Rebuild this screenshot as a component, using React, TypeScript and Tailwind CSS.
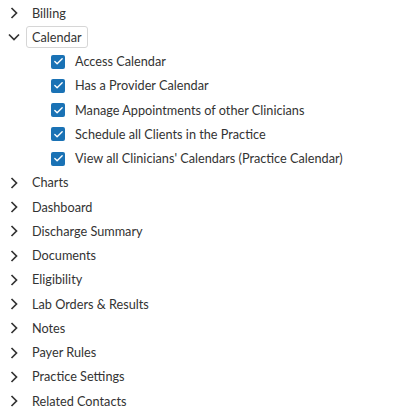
import { Check } from "lucide-react"

const before = ["Billing"]
const after = [
    "Charts",
    "Dashboard",
    "Discharge Summary",
    "Documents",
    "Eligibility",
    "Lab Orders & Results",
    "Notes",
    "Payer Rules",
    "Practice Settings",
    "Related Contacts",
]
const calendarPerms = [
    "Access Calendar",
    "Has a Provider Calendar",
    "Manage Appointments of other Clinicians",
    "Schedule all Clients in the Practice",
    "View all Clinicians' Calendars (Practice Calendar)",
]

const ChevronRight = () => (
    <svg width="8" height="12" viewBox="0 0 8 12" className="shrink-0">
        <path d="M1.5 1 L6.5 6 L1.5 11" fill="none" stroke="#333" strokeWidth="1.7" />
    </svg>
)

const ChevronDown = () => (
    <svg width="12" height="8" viewBox="0 0 12 8" className="shrink-0">
        <path d="M1 1.5 L6 6.5 L11 1.5" fill="none" stroke="#333" strokeWidth="1.7" />
    </svg>
)

const Row = ({ label }: { label: string }) => (
    <div className="flex h-[24.25px] items-center">
        <div className="flex w-[32px] justify-center pl-[3px] pr-[8px]">
            <ChevronRight />
        </div>
        <span>{label}</span>
    </div>
)

export default function App() {
    return (
        <div
            className="min-h-screen bg-white pt-[1px] text-[12.7px] text-[#333]"
            style={{ fontFamily: "Lato, 'Open Sans', sans-serif" }}
        >
            {before.map((l) => (
                <Row key={l} label={l} />
            ))}
            <div className="flex h-[24.25px] items-center">
                <div className="flex w-[26px] justify-center pl-[1px]">
                    <ChevronDown />
                </div>
                <span className="rounded-[3px] border border-[#d6d6d6] px-[5px] py-[1px] leading-[18px]">Calendar</span>
            </div>
            {calendarPerms.map((p) => (
                <div key={p} className="flex h-[24.25px] items-center pl-[51px]">
                    <span className="flex h-[14px] w-[14px] items-center justify-center rounded-[2px] bg-[#1a72b5]">
                        <Check size={11} strokeWidth={3} color="white" />
                    </span>
                    <span className="ml-[10px]">{p}</span>
                </div>
            ))}
            {after.map((l) => (
                <Row key={l} label={l} />
            ))}
        </div>
    )
}
